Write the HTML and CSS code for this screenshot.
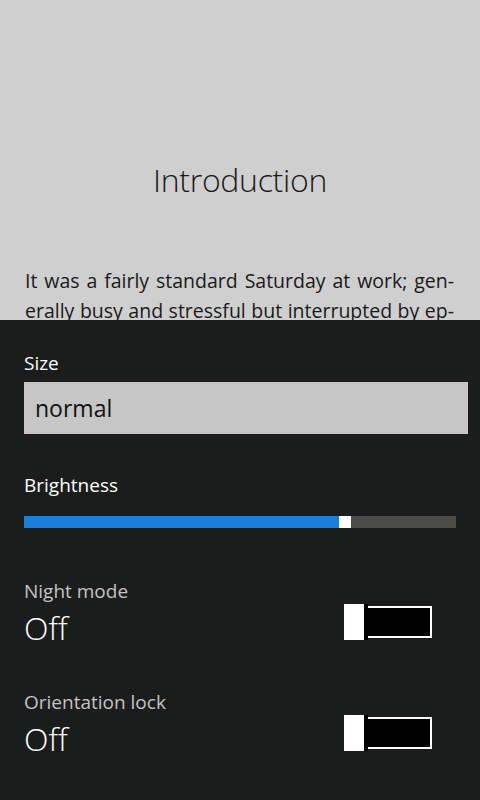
FILE: index.html
```html
<!DOCTYPE html>
<html lang="en">
<head>
  <meta charset="UTF-8">
  <title>Reader settings</title>
  <link rel="stylesheet" href="styles.css">
</head>
<body>
  <div class="reader">
    <h1>Introduction</h1>
    <p class="story">
      <span class="line">It was a fairly standard Saturday at work; gen-</span>
      <span class="line">erally busy and stressful but interrupted by ep-</span>
    </p>
  </div>

  <div class="panel">
    <label class="label">Size</label>
    <div class="picker">normal</div>

    <label class="label brightness">Brightness</label>
    <div class="slider">
      <div class="fill" style="width: 315px"></div>
      <div class="thumb"></div>
      <div class="rest"></div>
    </div>

    <div class="option">
      <div class="option-text">
        <div class="option-name">Night mode</div>
        <div class="option-value">Off</div>
      </div>
      <div class="toggle"><span class="knob"></span><span class="track"></span></div>
    </div>

    <div class="option">
      <div class="option-text">
        <div class="option-name">Orientation lock</div>
        <div class="option-value">Off</div>
      </div>
      <div class="toggle"><span class="knob"></span><span class="track"></span></div>
    </div>
  </div>
</body>
</html>
```

FILE: styles.css
```css
body {
  margin: 0;
  font-family: 'Open Sans', 'Noto Sans', sans-serif;
  background: #1a1d1b;
}

.reader {
  height: 320px;
  overflow: hidden;
  background: #cfcfcf;
  color: #1a1a1a;
}

h1 {
  margin: 0;
  padding-top: 157px;
  font-size: 32px;
  font-weight: 300;
  letter-spacing: -0.3px;
  line-height: 46px;
  text-align: center;
}

.story {
  margin: 63px 26px 0 25px;
  font-size: 19.5px;
  line-height: 30px;
}

.line {
  display: block;
  white-space: nowrap;
  text-align: justify;
  text-align-last: justify;
}

.panel {
  height: 480px;
  padding: 0 12px 0 24px;
  color: #fff;
}

.label {
  display: block;
  padding-top: 30px;
  font-size: 19px;
  line-height: 26px;
}

.picker {
  height: 52px;
  margin-top: 6px;
  padding-left: 11px;
  background: #c6c6c6;
  color: #111;
  font-size: 23px;
  line-height: 52px;
}

.label.brightness {
  padding-top: 38px;
}

.slider {
  display: flex;
  width: 432px;
  height: 12px;
  margin-top: 18px;
}

.fill {
  background: #1a7fd8;
}

.thumb {
  width: 12px;
  background: #fff;
}

.rest {
  flex: 1;
  background: #4b4c4a;
}

.option {
  display: flex;
  align-items: flex-end;
  justify-content: space-between;
  padding-right: 36px;
  margin-top: 50px;
}

.option + .option {
  margin-top: 41px;
}

.option-name {
  color: #c4c4c4;
  font-size: 19px;
  line-height: 26px;
}

.option-value {
  margin-top: 4px;
  font-size: 32px;
  font-weight: 300;
  line-height: 40px;
}

.toggle {
  display: flex;
  height: 36px;
  margin-bottom: 8px;
}

.knob {
  width: 20px;
  background: #fff;
  border-right: 4px solid #000;
}

.track {
  width: 62px;
  margin: 2px 0;
  background: #000;
  border: 2px solid #fff;
  border-left: none;
}
```
